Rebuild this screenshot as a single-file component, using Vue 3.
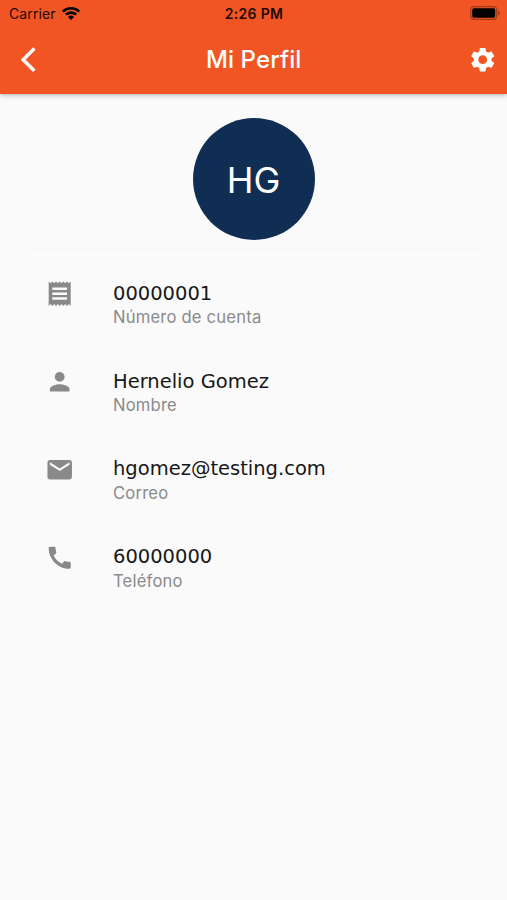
<script setup>
import { computed, ref } from 'vue'

const ICONS = {
  receipt: 'M18 17H6v-2h12v2zm0-4H6v-2h12v2zm0-4H6V7h12v2zM3 22l1.500-1.500L6 22l1.500-1.500L9 22l1.500-1.500L12 22l1.500-1.500L15 22l1.500-1.500L18 22l1.500-1.500L21 22V2l-1.500 1.500L18 2l-1.500 1.500L15 2l-1.500 1.500L12 2l-1.500 1.500L9 2 7.500 3.500 6 2 4.500 3.500 3 2v20z',
  person: 'M12 12c2.210 0 4-1.790 4-4s-1.790-4-4-4-4 1.790-4 4 1.790 4 4 4zm0 2c-2.670 0-8 1.340-8 4v2h16v-2c0-2.660-5.330-4-8-4z',
  email: 'M20 4H4c-1.100 0-1.990.9-1.990 2L2 18c0 1.100.9 2 2 2h16c1.100 0 2-.9 2-2V6c0-1.100-.9-2-2-2zm0 4l-8 5-8-5V6l8 5 8-5v2z',
  phone: 'M20.010 15.380c-1.230 0-2.420-.2-3.530-.56-.35-.12-.74-.03-1.010.24l-1.570 1.970c-2.830-1.350-5.480-3.900-6.890-6.830l1.950-1.660c.27-.28.35-.67.24-1.020-.37-1.110-.56-2.300-.56-3.530 0-.54-.45-.99-.99-.99H4.190C3.650 3 3 3.240 3 3.990 3 13.280 10.730 21 20.010 21c.71 0 .99-.63.99-1.180v-3.450c0-.54-.45-.99-.99-.99z',
}

const user = ref({
  name: 'Hernelio Gomez',
  account: '00000001',
  email: 'hgomez@testing.com',
  phone: '60000000',
})

const initials = computed(() =>
  user.value.name.split(' ').map((word) => word[0]).join('')
)

const fields = computed(() => [
  { id: 'account', icon: ICONS.receipt, value: user.value.account, label: 'Número de cuenta' },
  { id: 'name', icon: ICONS.person, value: user.value.name, label: 'Nombre' },
  { id: 'email', icon: ICONS.email, value: user.value.email, label: 'Correo' },
  { id: 'phone', icon: ICONS.phone, value: user.value.phone, label: 'Teléfono' },
])
</script>

<template>
  <div class="screen">
    <header class="header">
      <div class="status-bar">
        <div class="carrier">
          <span>Carrier</span>
          <svg class="wifi" viewBox="0 0 18 14">
            <path d="M0 4.700a12.800 12.800 0 0 1 18 0L16.300 6.500a10.300 10.300 0 0 0-14.600 0z" />
            <path d="M3 7.800a8.500 8.500 0 0 1 12 0l-1.800 1.800a6 6 0 0 0-8.400 0z" />
            <path d="M6 10.900a4.300 4.300 0 0 1 6 0L9 13.900z" />
          </svg>
        </div>
        <span class="time">2:26 PM</span>
        <svg class="battery" viewBox="0 0 31 14">
          <rect class="battery-shell" x="0.700" y="0.700" width="26" height="12.600" rx="3.300" />
          <rect x="2.200" y="2.200" width="23" height="9.600" rx="1.800" />
          <path class="battery-tip" d="M28 4.600c2.400.8 2.400 4 0 4.800z" />
        </svg>
      </div>

      <div class="nav-bar">
        <button class="nav-button" aria-label="Atrás">
          <svg class="icon back-icon" viewBox="0 0 24 24">
            <path d="M11.670 3.870L9.900 2.100 0 12l9.900 9.900 1.770-1.770L3.540 12z" />
          </svg>
        </button>
        <h1 class="title">Mi Perfil</h1>
        <button class="nav-button" aria-label="Ajustes">
          <svg class="icon" viewBox="0 0 24 24">
            <path d="M19.140 12.940c.04-.3.06-.61.06-.94 0-.32-.02-.64-.07-.94l2.030-1.580c.18-.14.23-.41.12-.61l-1.920-3.320c-.12-.22-.37-.29-.59-.22l-2.390.96c-.5-.38-1.030-.7-1.620-.94l-.36-2.540c-.04-.24-.24-.41-.48-.41h-3.840c-.24 0-.43.17-.47.41l-.36 2.540c-.59.24-1.130.57-1.620.94l-2.390-.96c-.22-.08-.47 0-.59.22L2.740 8.870c-.12.21-.08.47.12.61l2.030 1.580c-.05.3-.09.63-.09.94s.02.64.07.94l-2.030 1.580c-.18.14-.23.41-.12.61l1.920 3.320c.12.22.37.29.59.22l2.390-.96c.5.38 1.030.7 1.620.94l.36 2.540c.05.24.24.41.48.41h3.840c.24 0 .44-.17.47-.41l.36-2.540c.59-.24 1.130-.56 1.620-.94l2.390.96c.22.08.47 0 .59-.22l1.920-3.320c.12-.22.07-.47-.12-.61l-2.010-1.580zM12 15.600c-1.980 0-3.600-1.620-3.600-3.600s1.620-3.600 3.600-3.600 3.600 1.620 3.600 3.600-1.620 3.600-3.600 3.600z" />
          </svg>
        </button>
      </div>
    </header>

    <main class="content">
      <div class="avatar">{{ initials }}</div>
      <hr class="divider" />

      <ul class="fields">
        <li v-for="field in fields" :key="field.id" class="field" :class="field.id">
          <svg class="icon field-icon" viewBox="0 0 24 24">
            <path :d="field.icon" />
          </svg>
          <div class="field-text">
            <span class="value">{{ field.value }}</span>
            <span class="label">{{ field.label }}</span>
          </div>
        </li>
      </ul>
    </main>
  </div>
</template>

<style>
body {
  background: #fafafa;
}
</style>

<style scoped>
.screen {
  min-height: 900px;
  background: #fafafa;
  font-family: Inter, 'Liberation Sans', sans-serif;
}

.header {
  height: 93.500px;
  background: #f15523;
  box-shadow: 0 1px 5px rgba(0, 0, 0, 0.3);
}

.status-bar {
  display: grid;
  grid-template-columns: 1fr auto 1fr;
  align-items: center;
  height: 27px;
  padding: 0 6px 0 9px;
  color: #1d0a04;
  font-size: 14px;
}

.carrier {
  display: flex;
  align-items: center;
  gap: 6px;
  letter-spacing: 0.1px;
}

.wifi {
  width: 18px;
  height: 14px;
  margin-top: -1px;
}

.time {
  margin-left: -2px;
  font-weight: 600;
  letter-spacing: 0.3px;
}

.battery {
  justify-self: end;
  width: 31px;
  height: 14px;
  margin-top: -1px;
}

.battery-shell {
  fill: none;
  stroke: #a03916;
  stroke-width: 1.200;
}

.battery-tip {
  fill: #a03916;
}

.nav-bar {
  display: flex;
  align-items: center;
  justify-content: space-between;
  height: 66px;
  padding: 0 10px 0 20.500px;
}

.nav-button {
  display: flex;
  padding: 0;
  border: 0;
  background: none;
  color: #fff;
}

.icon {
  width: 29.400px;
  height: 29.400px;
  fill: currentColor;
}

.back-icon {
  stroke: currentColor;
  stroke-width: 0.500;
}

.title {
  margin: -1px 0 0 -10px;
  color: #fff;
  font-size: 24px;
  font-weight: 500;
  letter-spacing: 0.1px;
}

.content {
  padding: 24.500px 27px 0;
}

.avatar {
  display: flex;
  align-items: center;
  justify-content: center;
  box-sizing: border-box;
  width: 122px;
  height: 122px;
  margin: 0 auto;
  padding-top: 2px;
  border-radius: 50%;
  background: #102e54;
  color: #fff;
  font-size: 36px;
}

.divider {
  height: 1px;
  margin: 9px 0 12px;
  border: 0;
  background: #f4f4f4;
}

.fields {
  margin: 0;
  padding: 0 0 0 18px;
  list-style: none;
}

.field {
  display: flex;
  height: 88px;
}

.field-icon {
  flex: none;
  margin-top: 17px;
  color: #898989;
}

.field-text {
  display: flex;
  flex-direction: column;
  padding: 20px 0 0 38.600px;
}

.value {
  color: #171717;
  font-family: 'DejaVu Sans', sans-serif;
  font-size: 19.500px;
  line-height: 24px;
}

/* addresses and numbers sit a little higher above their label */
.email .value,
.phone .value {
  margin: -1px 0 1px;
}

.label {
  margin-top: -1px;
  color: #8a8a8a;
  font-size: 16.600px;
  line-height: 24px;
  letter-spacing: 0.2px;
}
</style>
